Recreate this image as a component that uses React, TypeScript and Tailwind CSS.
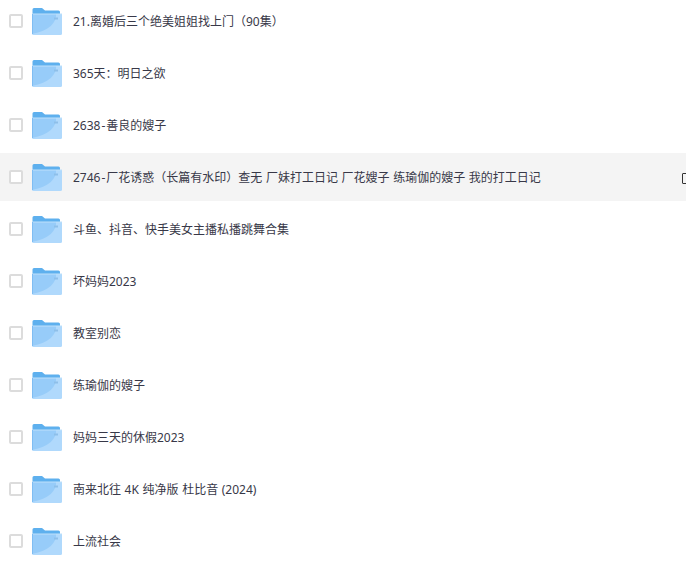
const rows = [
  "21.离婚后三个绝美姐姐找上门（90集）",
  "365天：明日之欲",
  "2638-善良的嫂子",
  "2746-厂花诱惑（长篇有水印）查无 厂妹打工日记 厂花嫂子 练瑜伽的嫂子 我的打工日记",
  "斗鱼、抖音、快手美女主播私播跳舞合集",
  "坏妈妈2023",
  "教室别恋",
  "练瑜伽的嫂子",
  "妈妈三天的休假2023",
  "南来北往 4K 纯净版 杜比音 (2024)",
  "上流社会",
];

function Folder() {
  return (
    <svg width="30" height="27" viewBox="0 0 30 27" className="block shrink-0">
      <path d="M0.500 1.500A1.500 1.500 0 0 1 2 0h8l3 2.500h13.500a1.500 1.500 0 0 1 1.500 1.500V8H0.500z" fill="#5eb0ee" />
      <path d="M0 6h30v19.500a1.500 1.500 0 0 1-1.500 1.500H1.500A1.500 1.500 0 0 1 0 25.500z" fill="#b0d9fc" />
      <path d="M0 6h24c1 8-7 17-24 20z" fill="#97ccf9" />
      <path d="M0 5.500h30V6.500H0z" fill="#bfe0fb" />
      <path d="M0 6h1v20H0z" fill="#7fbdf3" />
      <rect x="22" y="9.500" width="4" height="2" fill="#8ebfe9" />
    </svg>
  );
}

export default function App() {
  return (
    <div className="h-[579px] w-[686px] overflow-hidden bg-white font-['Noto_Sans','Noto_Sans_CJK_SC',sans-serif]">
      <div className="-mt-[5px]">
        {rows.map((t, i) => {
          const dash = t.indexOf("-");
          return (
            <div key={i} className="flex h-[52px] items-center">
              <div className={`relative flex h-12 w-full items-center ${i === 3 ? "bg-[#f4f4f4]" : ""}`}>
                <span className="ml-[9px] h-[14px] w-[14px] shrink-0 rounded-[2px] border-2 border-[#dcdcdc] bg-white" />
                <span className="ml-[9px]"><Folder /></span>
                <span className="ml-[11px] whitespace-nowrap pt-[2px] text-[12px] text-[#383848] [word-spacing:0.5px]">
                  {dash < 0 ? (
                    t
                  ) : (
                    <>
                      {t.slice(0, dash)}
                      <span className="px-px">-</span>
                      {t.slice(dash + 1)}
                    </>
                  )}
                </span>
                {i === 3 && (
                  <span className="absolute left-[682px] top-[20px] h-[11px] w-[8px] rounded-[1px] border border-[#333333]" />
                )}
              </div>
            </div>
          );
        })}
      </div>
    </div>
  );
}
